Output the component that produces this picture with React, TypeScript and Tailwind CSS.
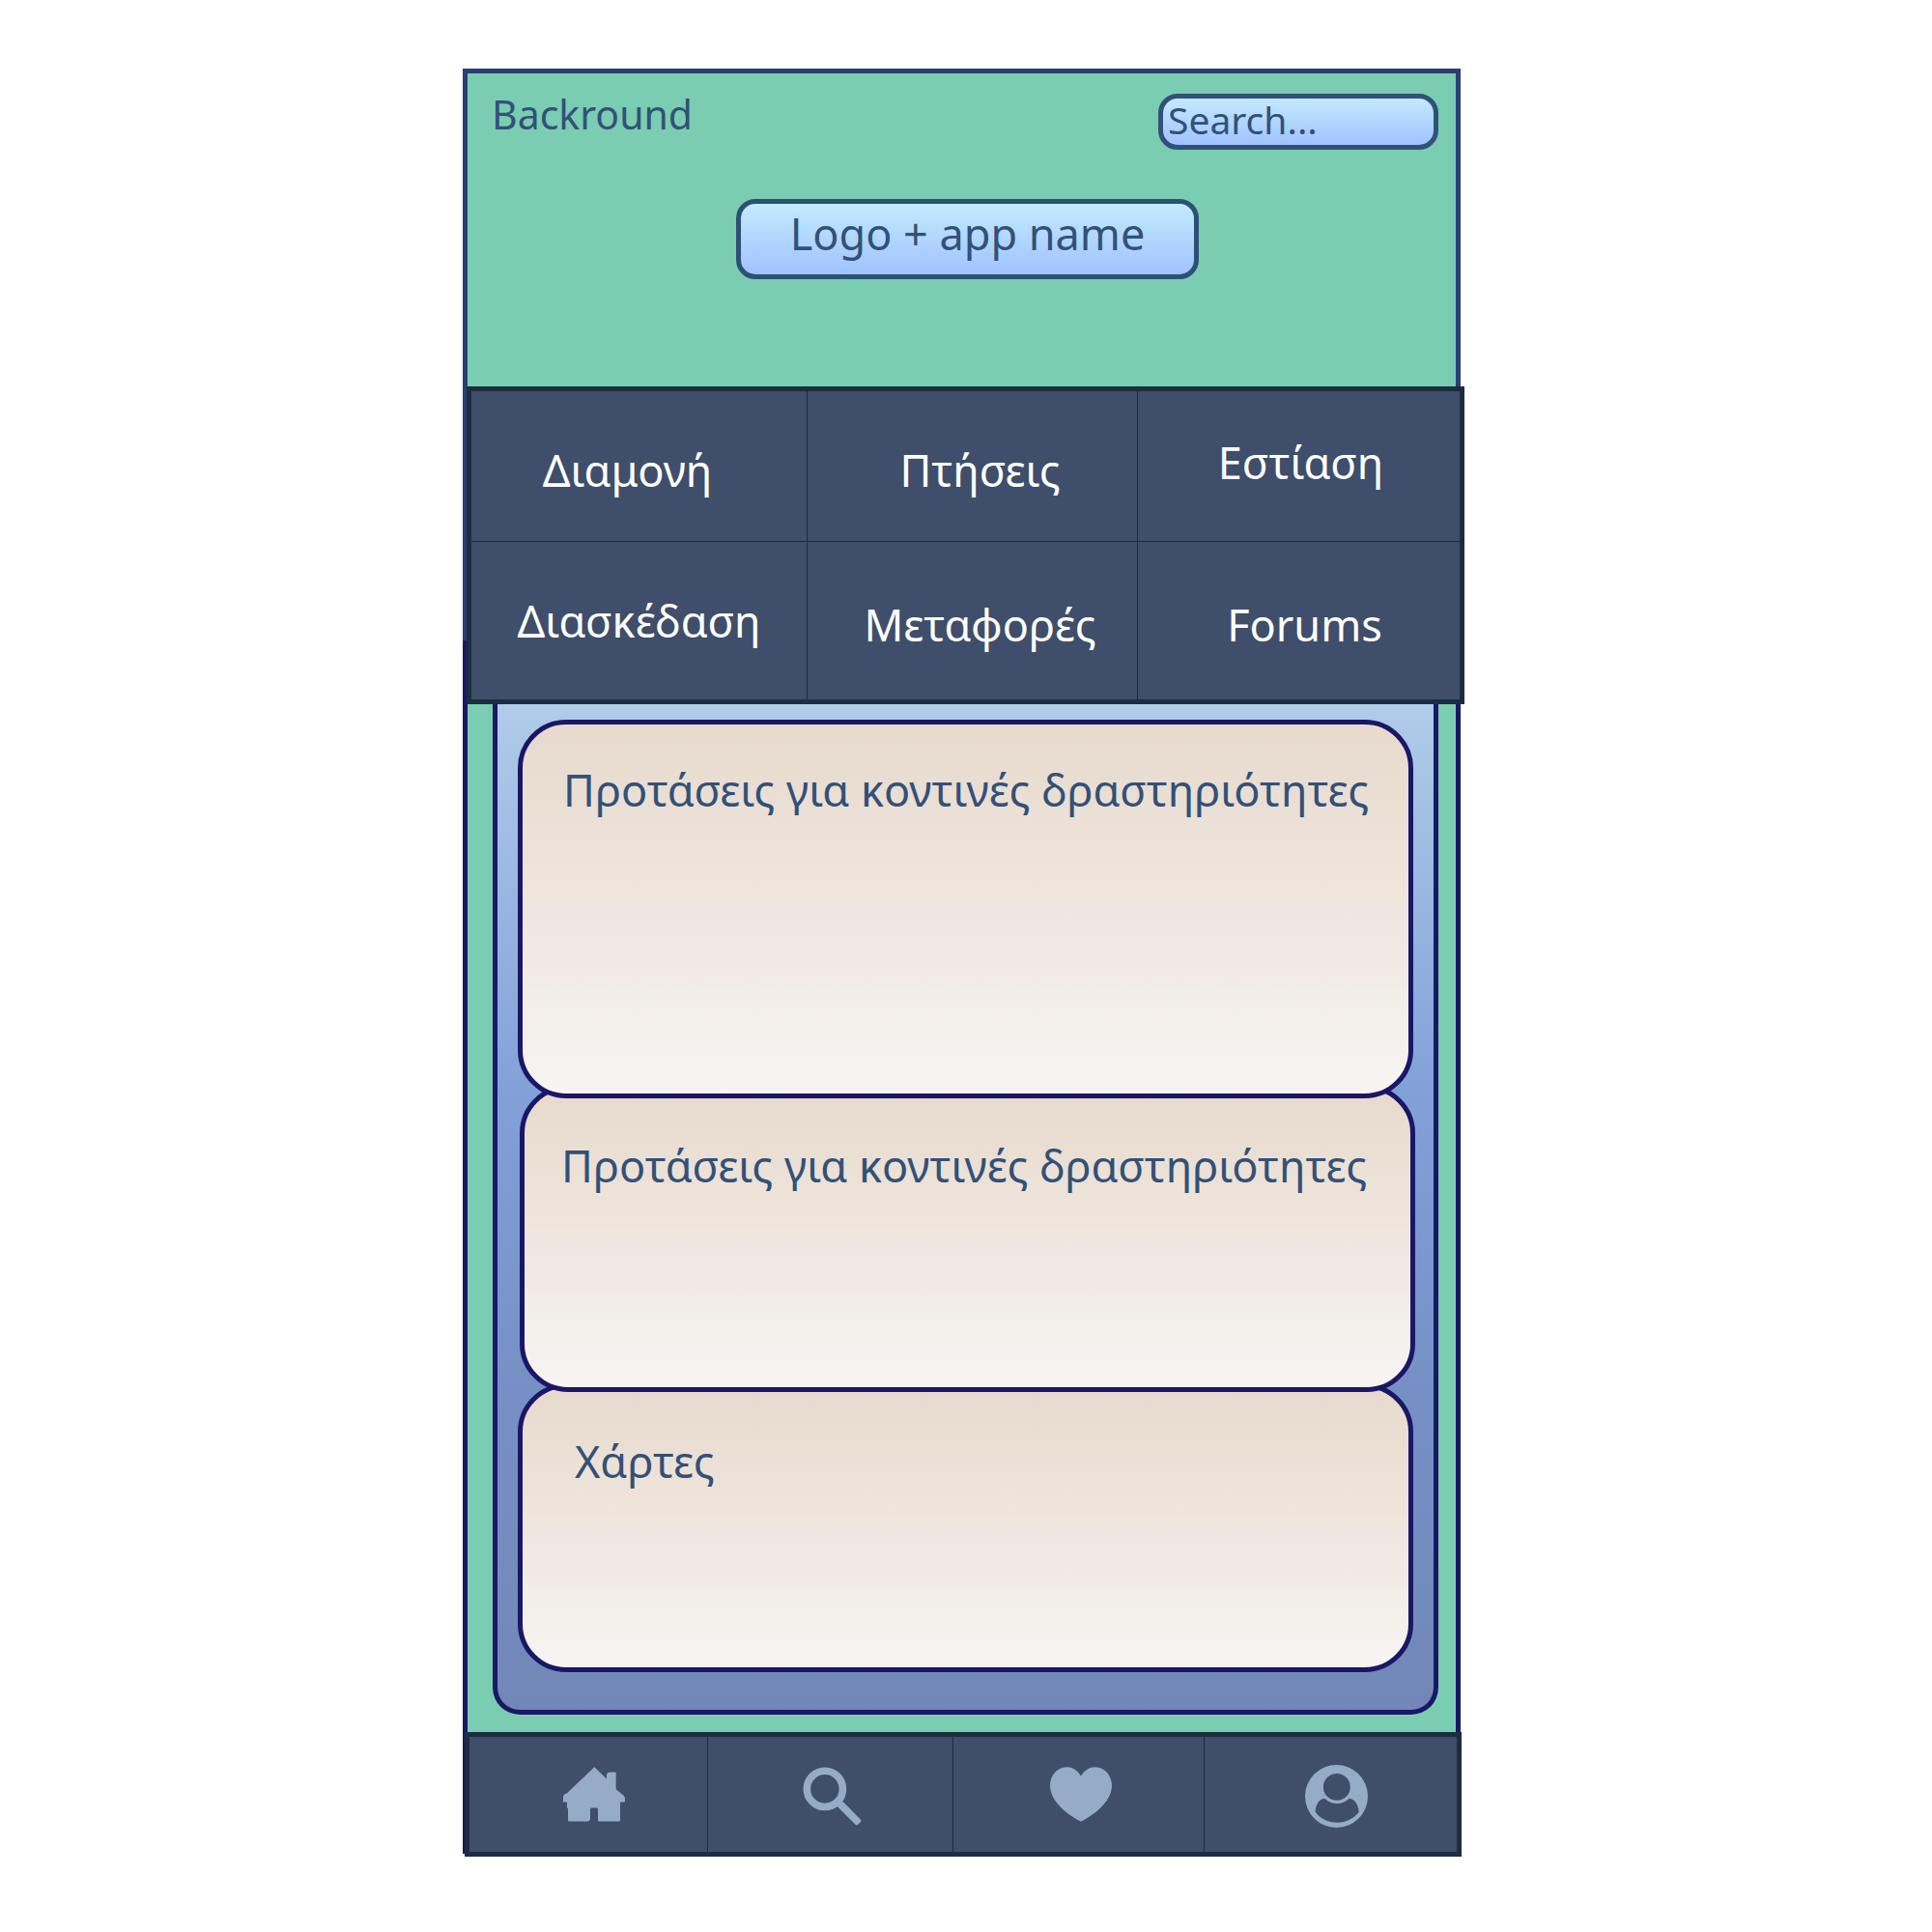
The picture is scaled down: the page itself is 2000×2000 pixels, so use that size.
import type { ReactNode } from "react";

const categories = [
  { label: "Διαμονή", spacing: "border-r border-b pt-2 pr-6" },
  { label: "Πτήσεις", spacing: "border-r border-b pt-2 pl-4" },
  { label: "Εστίαση", spacing: "border-b pb-2 pl-1" },
  { label: "Διασκέδαση", spacing: "border-r" },
  { label: "Μεταφορές", spacing: "border-r pt-2 pl-4" },
  { label: "Forums", spacing: "pt-2 pl-3" },
];

function HomeIcon() {
  return (
    <svg viewBox="336 152 192 170" className="h-[57px] w-16 fill-current" aria-hidden="true">
      <path d="M433 152 L471 189 V176 Q473 168 480 168 H497 Q500 168 500 172 V221 L524 241 Q528 245 528 250 V261 H513 V317 Q513 321 509 321 H448 Q444 321 444 317 V283 Q444 279 440 279 H424 Q420 279 420 283 V313 Q419 318 414 321 H354 Q351 321 351 317 V281 L348 278 V261 H336 V243 Q338 236 348 233 Z" />
    </svg>
  );
}

function SearchIcon() {
  return (
    <svg viewBox="333 146 184 182" className="h-[61px] w-[61px]" fill="none" stroke="currentColor" aria-hidden="true">
      <circle cx="402" cy="214" r="56" strokeWidth="23" />
      <path d="M440 268 L458 253 L514 310 Q517 313 514 316 L506 325 Q502 328 498 326 Z" fill="currentColor" stroke="none" />
    </svg>
  );
}

function HeartIcon() {
  return (
    <svg viewBox="321 146 192 170" className="h-[57px] w-16 fill-current" aria-hidden="true">
      <path d="M417 174 C406 156 391 146 373 146 C344 146 321 171 321 204 C321 248 366 289 417 316 C468 289 513 248 513 204 C513 171 490 146 461 146 C443 146 428 156 417 174 Z" />
    </svg>
  );
}

function ProfileIcon() {
  return (
    <svg viewBox="330 140 196 196" className="size-[65px] fill-current" aria-hidden="true">
      <path
        fillRule="evenodd"
        d="M428 140 a98 98 0 1 1 0 196 a98 98 0 1 1 0 -196 Z M429 167 a42 42 0 1 0 0 84 a42 42 0 1 0 0 -84 Z M391 245 C374 246 363 264 362 287 C378 308 402 320 430 320 C458 320 482 308 498 287 C496 264 485 246 468 245 C447 266 412 266 391 245 Z"
      />
    </svg>
  );
}

const tabs: { name: string; icon: ReactNode; cell: string }[] = [
  { name: "Home", icon: <HomeIcon />, cell: "border-r pl-3" },
  { name: "Search", icon: <SearchIcon />, cell: "border-r pt-1 pl-1" },
  { name: "Favourites", icon: <HeartIcon />, cell: "border-r pl-1" },
  { name: "Profile", icon: <ProfileIcon />, cell: "pt-1 pl-3" },
];

function Card({ title, className }: { title: string; className: string }) {
  return (
    <section
      className={`relative rounded-[50px] border-5 border-[#1a1766] bg-[linear-gradient(#e7d9ce,#efe6db_46%,#efe6e1_50%,#f3eae4_68%,#f2ede7_72%,#f8f4f2)] ${className}`}
    >
      <h2 className="text-[45px] leading-12 text-[#325178]">{title}</h2>
    </section>
  );
}

export default function App() {
  return (
    <div className="min-h-screen bg-white pt-[71px] pr-[5px] pb-[78px] font-['Noto_Sans',sans-serif]">
      <div className="mx-auto w-full max-w-[1037px] pr-1">
        <header className="h-[329px] border-x-5 border-t-5 border-[#273f75] bg-[#7acdb1] pt-[18px] text-[#325178]">
          <div className="flex items-start justify-between pr-[18px] pl-[25px]">
            <p className="text-[41px] leading-12">Backround</p>
            <input
              type="search"
              aria-label="Search"
              placeholder="Search..."
              className="mt-[3px] h-[58px] w-[290px] rounded-[20px] border-5 border-[#325178] bg-linear-to-b from-[#c3eafd] to-[#a1c2ff] pb-1 pl-[5px] text-[39px] outline-none placeholder:text-[#325178] placeholder:opacity-100"
            />
          </div>
          <div className="mt-[51px] flex justify-center pl-3">
            <h1 className="flex h-[83px] w-[479px] items-center justify-center rounded-[20px] border-5 border-[#2d5075] bg-linear-to-b from-[#c3eafd] to-[#a1c2ff] pb-3 text-[45px] leading-12">
              Logo + app name
            </h1>
          </div>
        </header>

        <div className="-mr-1 bg-[linear-gradient(#273f75_263px,#1a1766_263px)] bg-size-[4px_100%] bg-no-repeat pl-1">
          <nav
            aria-label="Categories"
            className="grid grid-cols-[348fr_342fr_333fr] grid-rows-[156px_163px] border-5 border-[#1c2d3f] bg-[#3f4e6a]"
          >
            {categories.map((c) => (
              <a
                key={c.label}
                href="#"
                className={`flex items-center justify-center border-[#1c2d3f] text-[45px] leading-12 text-white ${c.spacing}`}
              >
                {c.label}
              </a>
            ))}
          </nav>
        </div>

        <main className="border-x-5 border-[#1a1766] bg-[#7acdb1] pr-[18px] pb-[18px] pl-[26px]">
          <div className="rounded-b-[28px] border-x-5 border-b-5 border-[#1a1766] bg-[linear-gradient(#b0cce9,#82a1d8_38%,#7690c5_68%,#7287b8)] px-[21px] pt-4 pb-[39px]">
            <Card title="Προτάσεις για κοντινές δραστηριότητες" className="z-20 h-[392px] pt-11 pl-[42px]" />
            <Card
              title="Προτάσεις για κοντινές δραστηριότητες"
              className="z-10 -mt-[14px] -mr-0.5 ml-0.5 h-[318px] pt-[55px] pl-[38px]"
            />
            <Card title="Χάρτες" className="-mt-[9px] h-[299px] pt-[52px] pl-[54px]" />
          </div>
        </main>

        <div className="-mr-px bg-[linear-gradient(#1a1766,#1a1766)] bg-size-[2px_126px] bg-no-repeat pl-0.5">
          <nav
            aria-label="Main"
            className="grid h-[129px] grid-cols-[247fr_254fr_260fr_261fr] border-5 border-[#1c2d3f] bg-[#3f4e6a]"
          >
            {tabs.map((t) => (
              <button
                key={t.name}
                type="button"
                aria-label={t.name}
                className={`flex items-center justify-center border-[#1c2d3f] text-[#96abc7] ${t.cell}`}
              >
                {t.icon}
              </button>
            ))}
          </nav>
        </div>
      </div>
    </div>
  );
}
